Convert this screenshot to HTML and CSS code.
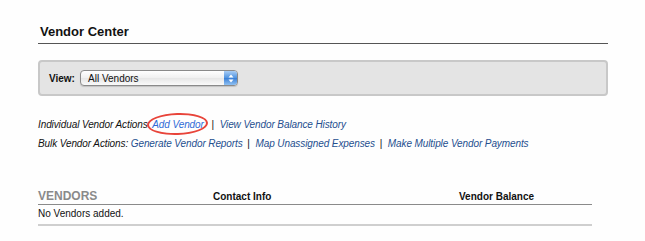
FILE: index.html
```html
<!DOCTYPE html>
<html lang="en">
  <head>
    <meta charset="UTF-8" />
    <title>Vendor Center</title>
    <link rel="stylesheet" href="styles.css">
  </head>
  <body>
    <div class="page">
      <h1 class="title">Vendor Center</h1>

      <div class="view-bar">
        <span class="view-label">View:</span>
        <div class="select">
          <span class="select-text">All Vendors</span>
          <span class="stepper">
            <svg width="12" height="13" viewBox="0 0 12 13">
              <path d="M6 2.5 L8.5 5.5 L3.5 5.5 Z" fill="#fff" />
              <path d="M6 10.5 L8.5 7.5 L3.5 7.5 Z" fill="#fff" />
            </svg>
          </span>
        </div>
      </div>

      <div class="actions">
        <div class="action-row">
          Individual Vendor Actions
          <span class="circled"><a href="#" class="link-bright">Add Vendor</a></span>
          <span class="sep">|</span>
          <a href="#">View Vendor Balance History</a>
        </div>
        <div class="action-row">
          Bulk Vendor Actions:
          <a href="#">Generate Vendor Reports</a>
          <span class="sep">|</span>
          <a href="#">Map Unassigned Expenses</a>
          <span class="sep">|</span>
          <a href="#">Make Multiple Vendor Payments</a>
        </div>
      </div>

      <div class="vendors">
        <div class="vendors-head">
          <span class="col-name">VENDORS</span>
          <span class="col-contact">Contact Info</span>
          <span class="col-balance">Vendor Balance</span>
        </div>
        <div class="vendors-empty">No Vendors added.</div>
      </div>
    </div>
  </body>
</html>
```

FILE: styles.css
```css
body {
  margin: 0;
  background: #fefefe;
  font-family: "Liberation Sans", Arial, sans-serif;
  color: #111;
}

.page {
  width: 570px;
  padding: 24px 0 0 38px;
}

.title {
  margin: 0;
  font-size: 13px;
  line-height: 16px;
  font-weight: bold;
  padding: 0 0 3px 2px;
  border-bottom: 1px solid #555;
}

.view-bar {
  margin-top: 16px;
  height: 32px;
  display: flex;
  align-items: center;
  background: #e4e4e4;
  border: 2px solid #c8c8c8;
  border-radius: 4px;
  padding-left: 9px;
}

.view-label {
  font-size: 10px;
  font-weight: bold;
  width: 31px;
}

.select {
  position: relative;
  width: 156px;
  height: 14px;
  border: 1px solid #8a8a8a;
  border-radius: 4px;
  background: linear-gradient(#ffffff, #f0f0f0 50%, #e6e6e6 51%, #fafafa);
  box-shadow: 0 1px 1px rgba(0, 0, 0, 0.15);
  display: flex;
  align-items: center;
}

.select-text {
  font-size: 10px;
  padding-left: 7px;
}

.stepper {
  position: absolute;
  right: 0;
  top: 0;
  width: 13px;
  height: 14px;
  border-radius: 0 3px 3px 0;
  background: linear-gradient(#a9cdf5, #4f93e0 50%, #3a7fd6 51%, #8fc0f2);
  display: flex;
  align-items: center;
  justify-content: center;
}

.actions {
  margin-top: 19px;
  font-size: 10px;
  font-style: italic;
  line-height: 19px;
  letter-spacing: -0.1px;
}

.action-row a {
  color: #254f8f;
  text-decoration: none;
}

.action-row a.link-bright {
  color: #2f6ad6;
}

.sep {
  font-style: normal;
  margin: 0 3px 0 2px;
}

.circled {
  position: relative;
  margin: 0 3px 0 2px;
}

.circled::after {
  content: "";
  position: absolute;
  left: -5px;
  right: -5px;
  top: -6px;
  bottom: -5px;
  border: 2px solid #e8443a;
  border-radius: 50%;
  transform: rotate(-2deg);
}

.vendors {
  margin-top: 37px;
  width: 554px;
}

.vendors-head {
  display: grid;
  grid-template-columns: 175px 246px 1fr;
  align-items: baseline;
  line-height: 13px;
  padding-bottom: 1px;
  border-bottom: 1px solid #8a8a8a;
}

.col-name {
  font-size: 12px;
  font-weight: bold;
  color: #8a8a8a;
}

.col-contact,
.col-balance {
  font-size: 10px;
  font-weight: bold;
}

.vendors-empty {
  font-size: 10px;
  line-height: 18px;
  padding-bottom: 1px;
  border-bottom: 2px solid #cfcfcf;
}
```
